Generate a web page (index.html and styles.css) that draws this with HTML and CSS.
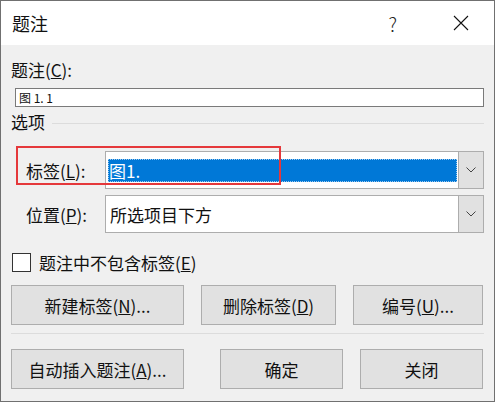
FILE: index.html
```html
<!DOCTYPE html>
<html lang="zh-CN">
<head>
    <meta charset="UTF-8">
    <meta name="viewport" content="width=device-width, initial-scale=1.0">
    <title>题注</title>
    <link rel="stylesheet" href="styles.css">
</head>
<body>
    <div class="dialog">
        <div class="title-bar">
            <span class="title">题注</span>
            <span class="help">?</span>
            <svg class="close" width="16" height="16" viewBox="0 0 16 16">
                <path d="M1 1 L15 15 M15 1 L1 15" stroke="#111" stroke-width="1.1" fill="none"/>
            </svg>
        </div>

        <div class="content">
            <div class="caption-label">题注(<u>C</u>):</div>
            <div class="caption-input">图 1. 1</div>

            <div class="group">
                <span>选项</span>
                <div class="group-line"></div>
            </div>

            <div class="field-row">
                <div class="highlight"></div>
                <label class="field-label">标签(<u>L</u>):</label>
                <div class="combo">
                    <div class="combo-value selected"><span>图1.</span></div>
                    <div class="combo-btn">
                        <svg width="10" height="6" viewBox="0 0 10 6"><path d="M0.5 0.5 L5 5 L9.5 0.5" stroke="#444" fill="none"/></svg>
                    </div>
                </div>
            </div>

            <div class="field-row second">
                <label class="field-label">位置(<u>P</u>):</label>
                <div class="combo">
                    <div class="combo-value"><span>所选项目下方</span></div>
                    <div class="combo-btn">
                        <svg width="10" height="6" viewBox="0 0 10 6"><path d="M0.5 0.5 L5 5 L9.5 0.5" stroke="#444" fill="none"/></svg>
                    </div>
                </div>
            </div>

            <div class="check-row">
                <div class="checkbox"></div>
                <span>题注中不包含标签(<u>E</u>)</span>
            </div>

            <div class="button-row">
                <button class="btn w173">新建标签(<u>N</u>)...</button>
                <button class="btn w135">删除标签(<u>D</u>)</button>
                <button class="btn w130">编号(<u>U</u>)...</button>
            </div>

            <div class="separator"></div>

            <div class="button-row bottom">
                <button class="btn w173">自动插入题注(<u>A</u>)...</button>
                <button class="btn w123 ok">确定</button>
                <button class="btn w123">关闭</button>
            </div>
        </div>
    </div>
</body>
</html>
```

FILE: styles.css
```css
body {
    margin: 0;
    font-family: "Noto Sans CJK SC", "Noto Sans", sans-serif;
    color: #111;
    background: #ffffff;
}
.dialog {
    width: 495px;
    height: 402px;
    box-sizing: border-box;
    border: 1px solid #707070;
    background-color: #f0f0f0;
}
.title-bar {
    height: 44px;
    background-color: white;
    display: flex;
    align-items: center;
    padding-left: 11px;
}
.title {
    font-size: 18px;
    flex: 1;
}
.help {
    font-size: 19px;
    font-weight: 300;
    margin-right: 56px;
    color: #222;
}
.close {
    margin-right: 25px;
}
.content {
    padding: 0 10px;
    font-size: 17px;
}
.caption-label {
    margin-top: 14px;
    line-height: 22px;
}
.caption-input {
    margin: 7px 0 0 4px;
    height: 19px;
    box-sizing: border-box;
    border: 1px solid #7a7a7a;
    background: white;
    font-size: 12px;
    line-height: 17px;
    padding-left: 3px;
}
.group {
    display: flex;
    align-items: center;
    margin-top: 4px;
    line-height: 22px;
}
.group-line {
    flex: 1;
    height: 1px;
    background-color: #dcdcdc;
    margin-left: 7px;
    margin-top: 3px;
}
.field-row {
    position: relative;
    display: flex;
    align-items: center;
    margin-top: 18px;
    height: 38px;
}
.field-row.second {
    margin-top: 6px;
}
.field-label {
    width: 79px;
    padding-left: 15px;
}
.highlight {
    position: absolute;
    left: 5px;
    top: -5px;
    width: 265px;
    height: 39px;
    box-sizing: border-box;
    border: 2px solid #e5383b;
}
.combo {
    flex: 1;
    height: 38px;
    display: flex;
    box-sizing: border-box;
    border: 1px solid #adadad;
    background: white;
}
.combo-value {
    flex: 1;
    display: flex;
    align-items: center;
    padding-left: 2px;
}
.combo-value span {
    padding-left: 1px;
}
.combo-value.selected span {
    flex: 1;
    margin-right: 1px;
    height: 23px;
    line-height: 23px;
    background-color: #0078d7;
    color: white;
    outline: 1px dotted #9ec9ee;
    outline-offset: -1px;
}
.combo-value:not(.selected) span {
    padding-left: 2px;
}
.combo-btn {
    width: 24px;
    border: 1px solid #cfcfcf;
    margin: -1px -1px -1px 0;
    border-color: #adadad;
    background-color: #e1e1e1;
    display: flex;
    align-items: center;
    justify-content: center;
}
.check-row {
    display: flex;
    align-items: center;
    margin-top: 20px;
    height: 19px;
}
.checkbox {
    width: 19px;
    height: 19px;
    box-sizing: border-box;
    border: 1px solid #333;
    background: white;
    margin-left: 1px;
    margin-right: 8px;
}
.button-row {
    display: flex;
    gap: 17px;
    margin-top: 13px;
}
.button-row.bottom {
    margin-top: 15px;
}
.btn {
    height: 40px;
    box-sizing: border-box;
    border: 1px solid #adadad;
    background-color: #e1e1e1;
    font-family: inherit;
    font-size: 17px;
    color: #111;
    padding: 0;
}
.w173 { width: 173px; }
.w135 { width: 135px; }
.w130 { width: 130px; }
.w123 { width: 123px; }
.ok {
    margin-left: 19px;
}
.separator {
    margin-top: 8px;
    height: 1px;
    background-color: #dcdcdc;
}
```
